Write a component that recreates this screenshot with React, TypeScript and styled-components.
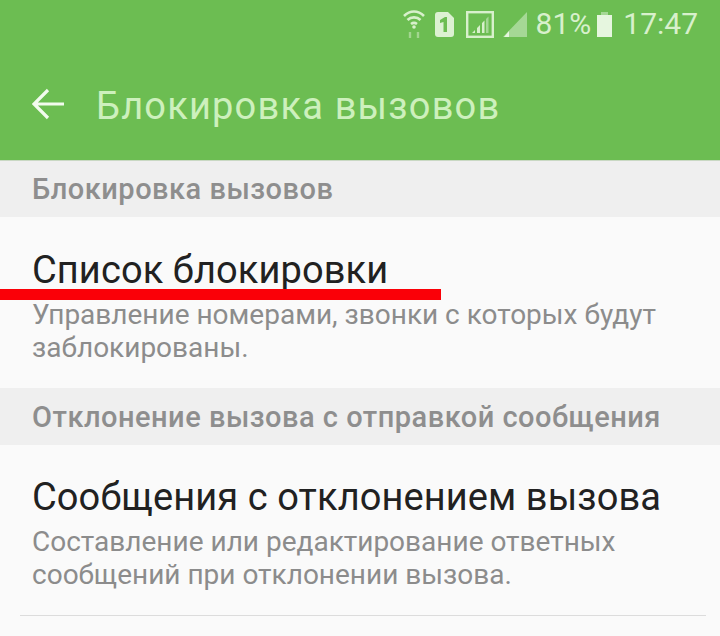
import React from "react";
import styled, { createGlobalStyle } from "styled-components";

const GlobalStyle = createGlobalStyle`
  html, body {
    margin: 0;
    padding: 0;
    background: #fafafa;
  }
  #root {
    width: 720px;
    height: 636px;
    overflow: hidden;
  }
`;

const Screen = styled.div`
  width: 720px;
  height: 636px;
  overflow: hidden;
  background: #fafafa;
  font-family: Roboto, "Liberation Sans", sans-serif;
`;

const AppBar = styled.header`
  height: 160px;
  background: #6cbd52;
  border-bottom: 1px solid #c9d8c3;
  box-sizing: content-box;
`;

const StatusBar = styled.div`
  height: 48px;
  padding-right: 22px;
  display: flex;
  justify-content: flex-end;
  align-items: center;
  color: #d8f0cc;
  font-size: 30px;
`;

const StatusText = styled.span<{ $gap: number }>`
  margin-left: ${(p) => p.$gap}px;
  line-height: 48px;
`;

const StatusIcon = styled.svg<{ $gap: number }>`
  display: block;
  margin-left: ${(p) => p.$gap}px;
`;

const ToolBar = styled.div`
  height: 112px;
  display: flex;
  align-items: center;
  padding-left: 32px;
  box-sizing: border-box;
`;

const Title = styled.h1`
  margin: 3px 0 0 32px;
  font-size: 38px;
  font-weight: 400;
  color: #cdf0bd;
  letter-spacing: 1.2px;
`;

const SectionHeader = styled.div<{ $height: number }>`
  height: ${(p) => p.$height}px;
  padding-left: 32px;
  display: flex;
  align-items: center;
  background: #efefef;
  color: #8e8e8e;
  font-size: 29px;
  font-weight: 500;
  letter-spacing: 0.5px;
  white-space: nowrap;
`;

const Item = styled.section<{ $height: number; $top: number }>`
  position: relative;
  height: ${(p) => p.$height}px;
  padding: ${(p) => p.$top}px 32px 0;
  box-sizing: border-box;
`;

const ItemTitle = styled.div`
  font-size: 38px;
  line-height: 46px;
  color: #212121;
  letter-spacing: 0.1px;
  white-space: nowrap;
`;

const ItemText = styled.div`
  margin-top: 5px;
  font-size: 28px;
  line-height: 33px;
  color: #8c8c8c;
  white-space: nowrap;
`;

const RedLine = styled.div`
  position: absolute;
  left: 0;
  top: 72px;
  width: 441px;
  height: 11px;
  background: #fa0008;
`;

const Divider = styled.div`
  height: 1px;
  margin: 0 14px 0 20px;
  background: #dcdcdc;
`;

const App = () => (
  <Screen>
    <GlobalStyle />
    <AppBar>
      <StatusBar>
        <StatusIcon $gap={0} width="24" height="32" viewBox="0 0 24 32" fill="none" stroke="#d8f0cc">
          <path d="M2 8 C8 2 16 2 22 8" strokeWidth="2.6" />
          <path d="M5.5 12 C9 8.5 15 8.5 18.5 12" strokeWidth="2.6" />
          <path d="M9 16 C11 14.5 13 14.5 15 16" strokeWidth="2.6" />
          <circle cx="12" cy="19" r="1.8" fill="#d8f0cc" stroke="none" />
          <path d="M8 30 V24 M16 30 V24" strokeWidth="2.4" opacity="0.5" />
        </StatusIcon>
        <StatusIcon $gap={9} width="19" height="25" viewBox="0 0 19 25">
          <path d="M3 0 H13 L19 6 V22 Q19 25 16 25 H3 Q0 25 0 22 V3 Q0 0 3 0 Z" fill="#dcf1d2" />
          <path d="M5 8 L10 5 H12 V20 H8.5 V10 L5 11 Z" fill="#6cbd52" />
        </StatusIcon>
        <StatusIcon $gap={12} width="28" height="27" viewBox="0 0 28 27" fill="none">
          <rect x="1.2" y="1.2" width="25.6" height="24.6" stroke="#d8f0cc" strokeWidth="2.4" />
          <path d="M6 22 L9 19 V22 Z M11 22 V17 L14 14 V22 Z M16 22 V12 L18.5 9.5 V22 Z" fill="#d8f0cc" />
          <path d="M20 22 V8 L22.5 5.5 V22 Z" fill="#a5d895" />
        </StatusIcon>
        <StatusIcon $gap={9} width="24" height="25" viewBox="0 0 24 25">
          <path d="M24 0 V25 H0 Z" fill="#a5d895" />
          <path d="M6 19 V25 H1 Z" fill="#e6f6df" />
        </StatusIcon>
        <StatusText $gap={9}>81%</StatusText>
        <StatusIcon $gap={5} width="17" height="25" viewBox="0 0 17 25">
          <path d="M5 0 H12 V3 H5 Z" fill="#a5d895" />
          <path d="M1 3 H16 V25 H1 Z" fill="#e6f6df" />
        </StatusIcon>
        <StatusText $gap={10}>17:47</StatusText>
      </StatusBar>
      <ToolBar>
        <svg width="32" height="32" viewBox="0 0 32 32" fill="none" stroke="#f2fbee" strokeWidth="3.2">
          <path d="M32 16 H2 M16 2 L2 16 L16 30" />
        </svg>
        <Title>Блокировка вызовов</Title>
      </ToolBar>
    </AppBar>
    <SectionHeader $height={56}>Блокировка вызовов</SectionHeader>
    <Item $height={171} $top={30}>
      <ItemTitle>Список блокировки</ItemTitle>
      <ItemText>
        Управление номерами, звонки с которых будут
        <br />
        заблокированы.
      </ItemText>
      <RedLine />
    </Item>
    <SectionHeader $height={57}>Отклонение вызова с отправкой сообщения</SectionHeader>
    <Item $height={170} $top={29}>
      <ItemTitle>Сообщения с отклонением вызова</ItemTitle>
      <ItemText>
        Составление или редактирование ответных
        <br />
        сообщений при отклонении вызова.
      </ItemText>
    </Item>
    <Divider />
  </Screen>
);

export default App;
